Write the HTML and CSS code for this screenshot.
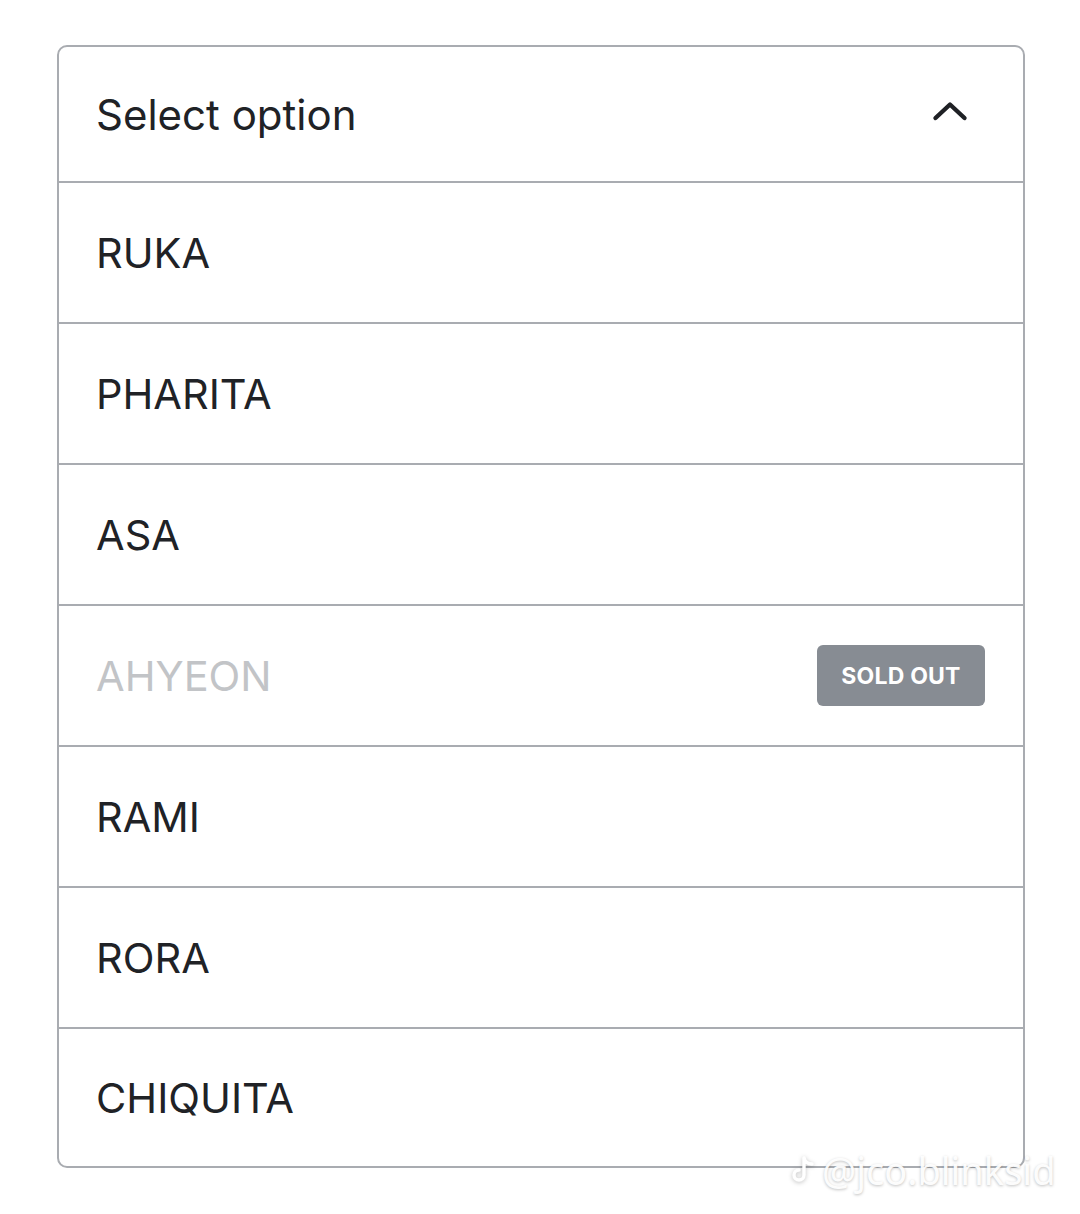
FILE: index.html
```html
<!DOCTYPE html>
<html>
<head>
<meta charset="utf-8">
<link rel="stylesheet" href="styles.css">
</head>
<body>
<div class="page">
  <div class="select">
    <div class="select-head">
      <span class="head-label">Select option</span>
      <svg class="chevron" width="36" height="22" viewBox="0 0 36 22"><path d="M3.5 18 L18 4.5 L32.5 18" fill="none" stroke="#1f2125" stroke-width="4.4" stroke-linecap="round" stroke-linejoin="round"/></svg>
    </div>
    <div class="option">RUKA</div>
    <div class="option">PHARITA</div>
    <div class="option">ASA</div>
    <div class="option disabled"><span>AHYEON</span><span class="badge">SOLD OUT</span></div>
    <div class="option">RAMI</div>
    <div class="option">RORA</div>
    <div class="option last">CHIQUITA</div>
  </div>
  <div class="watermark">
    <svg class="tt" width="26" height="30" viewBox="0 0 26 30"><path d="M14 3 V20 a5 5 0 1 1 -5 -5 M14 3 c1 4 4 6 8 6" fill="none" stroke="#ffffff" stroke-width="3.4" stroke-linecap="round"/></svg>
    <span>@jco.blinksid</span>
  </div>
</div>
</body>
</html>
```
FILE: styles.css
```css
html, body {
  margin: 0;
  padding: 0;
  background: #ffffff;
}
.page {
  position: relative;
  width: 1080px;
  height: 1214px;
  padding: 45px 0 0 57px;
  box-sizing: border-box;
  font-family: Inter, "Noto Sans", sans-serif;
}
.select {
  width: 968px;
  box-sizing: border-box;
  border: 2px solid #a9acb1;
  border-radius: 10px;
  overflow: hidden;
}
.select-head {
  height: 134px;
  display: flex;
  align-items: center;
  justify-content: space-between;
  padding: 0 55px 0 37px;
  border-bottom: 2px solid #a9acb1;
}
.head-label {
  font-size: 42px;
  color: #202226;
}
.chevron {
  display: block;
  margin-top: -6px;
}
.option {
  height: 139px;
  display: flex;
  align-items: center;
  justify-content: space-between;
  padding: 0 38px 0 37px;
  border-bottom: 2px solid #a9acb1;
  font-size: 41.5px;
  color: #202226;
}
.option.last {
  border-bottom: none;
  height: 137px;
}
.option.disabled {
  color: #c2c4c7;
}
.badge {
  display: flex;
  align-items: center;
  justify-content: center;
  width: 168px;
  height: 61px;
  background: #878c93;
  border-radius: 6px;
  color: #ffffff;
  font-size: 23px;
  font-weight: 700;
  letter-spacing: 0.2px;
}
.watermark {
  position: absolute;
  left: 790px;
  top: 1144px;
  display: flex;
  align-items: center;
  gap: 6px;
  color: rgba(255,255,255,0.95);
  font-size: 38px;
  font-family: "Noto Sans", sans-serif;
  text-shadow: 0 1px 3px rgba(0,0,0,0.25);
}
.tt {
  filter: drop-shadow(0 1px 2px rgba(0,0,0,0.25));
}
```
